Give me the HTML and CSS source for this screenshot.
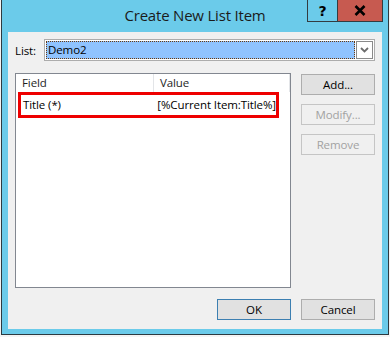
FILE: index.html
```html
<!DOCTYPE html>
<html lang="en">
<head>
    <meta charset="UTF-8">
    <title>Create New List Item</title>
    <link rel="stylesheet" href="styles.css">
</head>
<body>
    <div class="window">
        <!-- Title bar -->
        <div class="titlebar">
            <div></div>
            <div class="title">Create New List Item</div>
            <div class="caption-buttons">
                <span class="cap-btn help">?</span>
                <span class="cap-btn close">
                    <svg width="12" height="11" viewBox="0 0 12 11"><path d="M1.5 1 L10.5 10 M10.5 1 L1.5 10" stroke="#000" stroke-width="2.6"/></svg>
                </span>
            </div>
        </div>

        <!-- Dialog body -->
        <div class="client">
            <div class="list-row">
                <span class="label">List:</span>
                <div class="combo">
                    <div class="combo-value">Demo2</div>
                    <div class="combo-arrow">
                        <svg width="9" height="6" viewBox="0 0 9 6"><path d="M1 1 L4.5 4.5 L8 1" stroke="#6d6d6d" stroke-width="1.8" fill="none"/></svg>
                    </div>
                </div>
            </div>

            <div class="middle">
                <div class="listview">
                    <div class="lv-header">
                        <div class="col-field">Field</div>
                        <div class="col-value">Value</div>
                    </div>
                    <div class="lv-row">
                        <div class="col-field">Title (*)</div>
                        <div class="col-value">[%Current Item:Title%]</div>
                    </div>
                </div>
                <div class="side-buttons">
                    <button class="btn">Add...</button>
                    <button class="btn" disabled>Modify...</button>
                    <button class="btn" disabled>Remove</button>
                </div>
            </div>

            <div class="footer">
                <button class="btn default">OK</button>
                <button class="btn">Cancel</button>
            </div>
        </div>
    </div>
</body>
</html>
```

FILE: styles.css
```css
/* Page behind the dialog */
body {
    margin: 0;
    background: #f4f4f4;
    font-family: "Open Sans", "Noto Sans", sans-serif;
    font-size: 11.5px;
    letter-spacing: -0.1px;
    color: #000;
}

/* Outer window frame */
.window {
    margin-left: 1px;
    width: 386px;
    height: 334px;
    background: #6bcbea;
    border: 1px solid #2d3a40;
    border-top: none;
    display: flex;
    flex-direction: column;
}

.titlebar {
    height: 32px;
    display: grid;
    grid-template-columns: 1fr auto 1fr;
}

.title {
    font-size: 15px;
    color: #1b1b1b;
    padding-top: 5px;
    letter-spacing: -0.2px;
}

.caption-buttons {
    justify-self: end;
    display: flex;
    margin-right: 5px;
}

.cap-btn {
    height: 22px;
    border: 1px solid #333c40;
    border-top: none;
    display: flex;
    align-items: center;
    justify-content: center;
    box-sizing: border-box;
}

.cap-btn.help {
    width: 30px;
    font-weight: bold;
    font-size: 14px;
    font-family: "DejaVu Sans", sans-serif;
    border-right: none;
}

.cap-btn.close {
    width: 46px;
    background: #c75a50;
}

/* Grey client area */
.client {
    margin: 0 6px;
    height: 297px;
    background: #f0f0f0;
    padding: 7px 7px 9px 7px;
    box-sizing: border-box;
    display: flex;
    flex-direction: column;
}

.list-row {
    display: flex;
    align-items: center;
    height: 22px;
}

.label {
    width: 29px;
}

.combo {
    flex: 1;
    height: 22px;
    border: 1px solid #acacac;
    box-sizing: border-box;
    background: #fff;
    display: flex;
    padding: 1px;
    gap: 1px;
}

.combo-value {
    flex: 1;
    background: #8fc3ff;
    border: 1px dotted #6b3a10;
    line-height: 16px;
    padding-left: 1px;
}

.combo-arrow {
    width: 17px;
    border: 1px solid #8a8a8a;
    box-sizing: border-box;
    display: flex;
    align-items: center;
    justify-content: center;
}

/* List view and side buttons */
.middle {
    display: flex;
    gap: 10px;
    margin-top: 12px;
}

.listview {
    width: 276px;
    height: 215px;
    box-sizing: border-box;
    border: 1px solid #828790;
    background: #fff;
}

.lv-header {
    display: flex;
    height: 18px;
    line-height: 18px;
    color: #1e1e1e;
}

.lv-header .col-field {
    border-right: 1px solid #e3e5e8;
}

.lv-header .col-value {
    flex: 1;
    border-right: 1px solid #e3e5e8;
}

.col-field {
    width: 131px;
    padding-left: 6px;
}

.col-value {
    padding-left: 6px;
    white-space: nowrap;
}

/* highlighted row (red annotation box) */
.lv-row {
    display: flex;
    margin-left: 2px;
    width: 261px;
    height: 26px;
    box-sizing: border-box;
    border: 3px solid #ee0000;
    line-height: 19px;
}

.lv-row .col-field {
    width: 137px;
    padding-left: 2px;
}

.lv-row .col-value {
    padding-left: 0;
}

.side-buttons {
    display: flex;
    flex-direction: column;
    gap: 9px;
    margin-top: 1px;
}

.btn {
    width: 74px;
    height: 21px;
    font-family: inherit;
    font-size: 11.5px;
    letter-spacing: -0.1px;
    padding: 0;
    background: #e1e1e1;
    border: 1px solid #adadad;
    color: #000;
}

.btn:disabled {
    background: #f0f0f0;
    border-color: #c5c5c5;
    color: #a2a2a2;
}

.btn.default {
    border-color: #3c7fb1;
}

.footer {
    margin-top: auto;
    display: flex;
    justify-content: flex-end;
    gap: 10px;
}
```
